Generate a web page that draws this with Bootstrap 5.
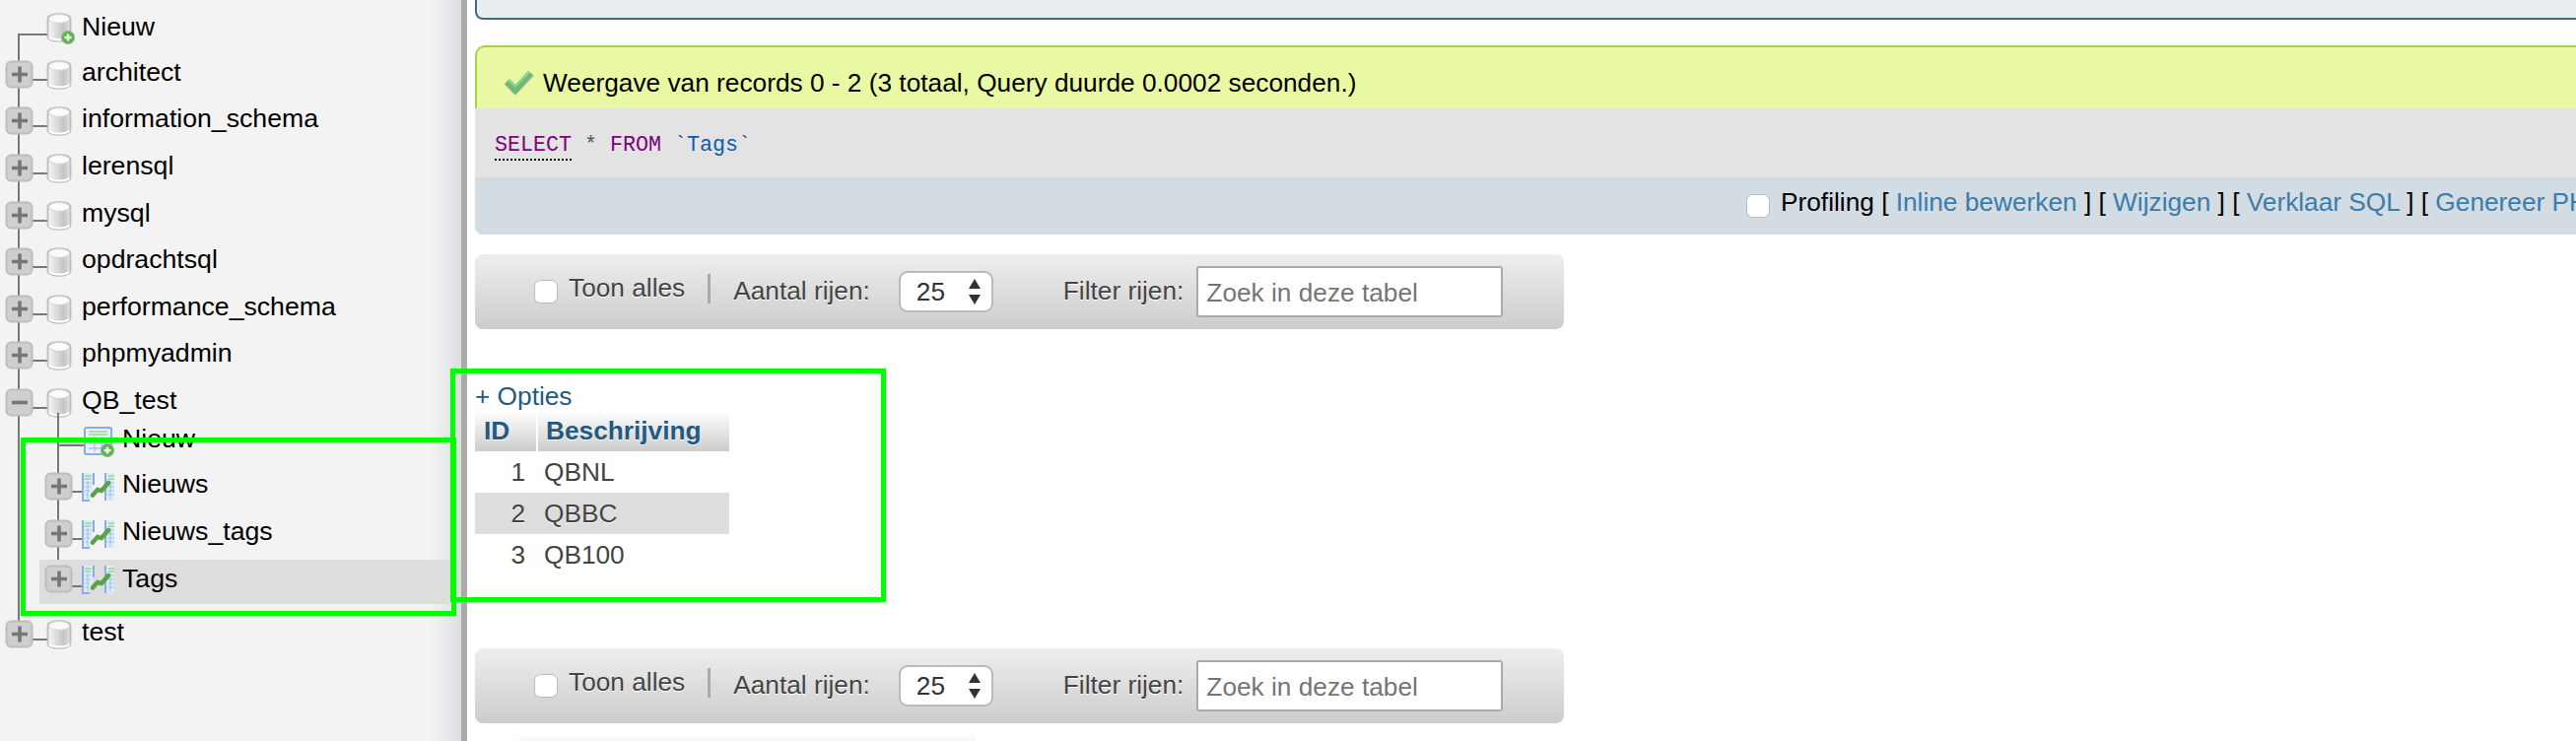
<!DOCTYPE html>
<html lang="nl">
<head>
<meta charset="utf-8">
<title>phpMyAdmin</title>
<link href="https://cdn.jsdelivr.net/npm/bootstrap@5.3.0/dist/css/bootstrap.min.css" rel="stylesheet">
<style>
html,body{height:752px;overflow:hidden}
body{font-family:"Liberation Sans",Arial,sans-serif;font-size:26.67px;color:#000;background:#fff;position:relative}
.pma-side{width:474px;height:752px;flex:none;border-right:6px solid #aaa;background:linear-gradient(to right,#f3f3f3 calc(100% - 32px),#dde0e3)}
.pma-tree{position:relative;margin:0;padding:0;list-style:none}
.pma-tree::before{content:"";position:absolute;left:18px;top:34px;width:2px;height:600px;background:#777}
.pma-sub{position:relative;margin:0 0 0 40px;padding:0;list-style:none}
.pma-sub::before{content:"";position:absolute;left:18px;top:-14px;width:2px;height:150px;background:#777}
.pma-row{position:relative;height:47.6px;display:flex;align-items:center}
.pma-row svg{flex:none;overflow:visible}
.pma-label{margin-left:7px;padding-bottom:6px;line-height:1.2;white-space:nowrap}
.pma-sub .pma-label{margin-left:8px}
.row-first{height:52px}
.row-first .pma-label{padding:2px 0 0}
.row-new{height:37.2px}
.row-new .pma-label{padding-bottom:12px}
.row-sub{height:48px}
.row-hl{height:45px;margin-top:2px;background:#ddd}
.row-last{margin-top:7px;height:48px}
.pma-main{flex:1 1 0;min-width:0;padding-left:8px;overflow:hidden;font-size:26.25px}
.pma-top{height:20px;background:#e8eef2;border:solid #3d6b80;border-width:0 0 2px 2px;border-bottom-left-radius:8px}
.pma-ok{margin-top:26px;height:64px;background:#e9f9a3;border:solid #a5d04a;border-width:2px 0 0 2px;border-top-left-radius:10px;padding:12px 0 0 27px;gap:8px;white-space:nowrap}
.pma-sql{height:70px;background:#e3e3e3;padding:7px 0 0 20px;font-family:"Liberation Mono","Courier New",monospace;font-size:21.67px;line-height:62px;color:#555;white-space:pre}
.sql-kw{color:#800080}
.sql-abbr{border-bottom:2px dotted #000;padding-bottom:1px}
.sql-id{color:#0b5cad}
.pma-links{height:58px;background:#d3dbe3;border-bottom-left-radius:8px;padding-left:1290px;white-space:nowrap}
.pma-links a{color:#3a7dab;text-decoration:none}
.links-text{padding-bottom:6px}
.pma-tick{width:24px;height:24px;margin:0 11px 0 0;flex:none;border:1px solid #bbb;border-radius:5px;background-color:#fff}
.pma-bar{width:1105px;height:76px;margin-top:20px;border-radius:8px;background:linear-gradient(#eee,#ccc);padding-left:60px;color:#444;text-shadow:0 1px 0 #fff;white-space:nowrap}
.bar-show{padding-bottom:6px}
.bar-sep{width:3px;height:30px;margin:0 23px 6px 23px;background:#aaa}
.bar-sel.form-select{width:96px;height:42px;flex:none;margin:0 71px 0 29px;padding:0 0 0 16px;font-size:26.25px;color:#333;border:2px solid #bbb;border-radius:9px;box-shadow:none;background-color:#fff;background-position:right 10px center;background-size:14px 28px;background-image:url("data:image/svg+xml,%3Csvg xmlns='http://www.w3.org/2000/svg' viewBox='0 0 14 28'%3E%3Cpath fill='%23333' d='M7 1l6 10H1zM7 27L1 17h12z'/%3E%3C/svg%3E")}
.bar-find.form-control{width:311px;height:52px;flex:none;margin-left:13px;padding:2px 8px 0;font-family:inherit;font-size:26.25px;color:#333;border:2px solid #aaa;border-radius:3px;box-shadow:none}
.bar-find.form-control::placeholder{color:#757575;opacity:1}
.pma-opts{margin-top:53px;height:30px;line-height:30px;color:#235a81}
.pma-grid.table{width:258px;margin:0;table-layout:fixed;border-collapse:separate;border-spacing:0;color:#444}
.pma-grid.table>thead>tr>th{height:41px;padding:0 0 0 8px;background:linear-gradient(#fff,#ccc);color:#235a81;font-weight:700;line-height:41px;border:0;box-shadow:none;text-shadow:0 1px 0 #fff}
.pma-grid.table>thead>tr>th:first-child{border-right:2px solid #fff;padding-left:9px}
.pma-grid.table>tbody>tr>td{height:42px;padding:0 0 0 6px;background:#fff;color:#444;line-height:42px;border:0;box-shadow:none;text-shadow:0 1px 0 #fff}
.pma-grid.table>tbody>tr>td:first-child{text-align:right;padding:0 13px 0 0}
.pma-grid.table>tbody>tr.grid-alt>td{background:#ddd}
.col-id{width:64px}
.bar-low{margin-top:74px}
.pma-fade{width:463px;height:8px;margin:10px 0 0 45px;background:linear-gradient(#fff,#f7f7f7)}
.pma-mark{position:absolute;border:5px solid #0f0;pointer-events:none}
.mark-tree{left:21px;top:444px;width:442px;height:181px}
.mark-grid{left:457px;top:374px;width:442px;height:237px}
</style>
</head>
<body>
<svg width="0" height="0" class="d-block" aria-hidden="true">
<defs>
<linearGradient id="dbg" x1="0" x2="1" y1="0" y2="0"><stop offset="0" stop-color="#f8f8f8"/><stop offset=".3" stop-color="#e2e2e2"/><stop offset=".72" stop-color="#c4c4c4"/><stop offset="1" stop-color="#e6e6e6"/></linearGradient>
<g id="ic-db">
<path d="M0.500-9C0.500-15.500 23.500-15.500 23.500-9V9C23.500 15.500 0.500 15.500 0.500 9Z" fill="url(#dbg)" stroke="#bdbdbd" stroke-width="1.8"/>
<path d="M1.500 8C3 12.500 21 12.500 22.500 8V10.500C21 14.500 3 14.500 1.500 10.500Z" fill="#fff"/>
<ellipse cx="12" cy="-9" rx="10.500" ry="4.400" fill="#fbfbfb" stroke="#d4d4d4"/>
</g>
<g id="ic-plus"><rect x="7" y="-13.500" width="26" height="26" rx="5" transform="translate(-0.500 0)" fill="#cfcfcf" stroke="#bdbdbd" stroke-width="2"/><path d="M12-.5H28M20-8.500V7.500" stroke="#777" stroke-width="3.600" fill="none"/></g>
<g id="ic-minus"><rect x="7" y="-13.500" width="26" height="26" rx="5" transform="translate(-0.500 0)" fill="#cfcfcf" stroke="#bdbdbd" stroke-width="2"/><path d="M12-.5H28" stroke="#777" stroke-width="3.600" fill="none"/></g>
<g id="ic-add"><circle r="6.600" fill="#5fae4f" stroke="#8fc587" stroke-width="1.200"/><path d="M-3.600 0H3.600M0-3.600V3.600" stroke="#e9f5e5" stroke-width="2.600"/></g>
<g id="ic-tbl">
<path d="M0-14H11V-3L7 14H0Z" fill="#dfeafa"/>
<path d="M0-14V14H7M11-14V-2" stroke="#86ade4" stroke-width="2" fill="none"/>
<path d="M2-11H9M2-8H8" stroke="#9bd48f" stroke-width="1.600"/>
<path d="M2-4H9M2 0H8M2 4H7M2 8H6M5-6V12" stroke="#a9c5ea" stroke-width="1.200"/>
<path d="M32-14H23V14H32Z" fill="#dfeafa"/>
<path d="M23-14V14" stroke="#86ade4" stroke-width="2" fill="none"/>
<path d="M26-11H32M26-8H32" stroke="#9bd48f" stroke-width="1.600"/>
<path d="M25-4H32M25 0H32M25 4H32M25 8H32M28-6V13" stroke="#a9c5ea" stroke-width="1.200"/>
<path d="M10 8.500L15 3 19 4 26-4" stroke="#5aa24a" stroke-width="4.600" fill="none" stroke-linecap="round"/>
</g>
<g id="ic-newtbl">
<rect x="2" y="-14" width="27" height="27" rx="2" fill="#e9f1fa" stroke="#86ade4" stroke-width="2"/>
<path d="M6-10H25M6-7H25" stroke="#9bd48f" stroke-width="1.600"/>
<path d="M6-3H25M6 2H25M6 7H25M12-5V11M19-5V11" stroke="#a9c5ea" stroke-width="1.400"/>
</g>
</defs>
</svg>
<div class="d-flex">
<nav class="pma-side">
<ul class="pma-tree">
<li class="pma-row row-first"><svg width="76" height="52" viewBox="0 -28 76 52"><path d="M19 7H48" stroke="#777" stroke-width="2"/><use href="#ic-db" x="48"/><use href="#ic-add" x="69" y="10"/></svg><span class="pma-label">Nieuw</span></li>
<li class="pma-row"><svg width="76" height="48" viewBox="0 -24 76 48"><path d="M33 5H48" stroke="#777" stroke-width="2"/><use href="#ic-plus"/><use href="#ic-db" x="48"/></svg><span class="pma-label">architect</span></li>
<li class="pma-row"><svg width="76" height="48" viewBox="0 -24 76 48"><path d="M33 5H48" stroke="#777" stroke-width="2"/><use href="#ic-plus"/><use href="#ic-db" x="48"/></svg><span class="pma-label">information_schema</span></li>
<li class="pma-row"><svg width="76" height="48" viewBox="0 -24 76 48"><path d="M33 5H48" stroke="#777" stroke-width="2"/><use href="#ic-plus"/><use href="#ic-db" x="48"/></svg><span class="pma-label">lerensql</span></li>
<li class="pma-row"><svg width="76" height="48" viewBox="0 -24 76 48"><path d="M33 5H48" stroke="#777" stroke-width="2"/><use href="#ic-plus"/><use href="#ic-db" x="48"/></svg><span class="pma-label">mysql</span></li>
<li class="pma-row"><svg width="76" height="48" viewBox="0 -24 76 48"><path d="M33 5H48" stroke="#777" stroke-width="2"/><use href="#ic-plus"/><use href="#ic-db" x="48"/></svg><span class="pma-label">opdrachtsql</span></li>
<li class="pma-row"><svg width="76" height="48" viewBox="0 -24 76 48"><path d="M33 5H48" stroke="#777" stroke-width="2"/><use href="#ic-plus"/><use href="#ic-db" x="48"/></svg><span class="pma-label">performance_schema</span></li>
<li class="pma-row"><svg width="76" height="48" viewBox="0 -24 76 48"><path d="M33 5H48" stroke="#777" stroke-width="2"/><use href="#ic-plus"/><use href="#ic-db" x="48"/></svg><span class="pma-label">phpmyadmin</span></li>
<li class="pma-row"><svg width="76" height="48" viewBox="0 -24 76 48"><path d="M33 5H48" stroke="#777" stroke-width="2"/><use href="#ic-minus"/><use href="#ic-db" x="48"/></svg><span class="pma-label">QB_test</span></li>
<li>
<ul class="pma-sub">
<li class="pma-row row-new"><svg width="76" height="38" viewBox="0 -19 76 38"><path d="M19 1H46" stroke="#777" stroke-width="2"/><use href="#ic-newtbl" x="44" y="-3"/><use href="#ic-add" x="69" y="6"/></svg><span class="pma-label">Nieuw</span></li>
<li class="pma-row row-sub"><svg width="76" height="48" viewBox="0 -24 76 48"><path d="M33 5H44" stroke="#777" stroke-width="2"/><use href="#ic-plus"/><use href="#ic-tbl" x="44"/></svg><span class="pma-label">Nieuws</span></li>
<li class="pma-row row-sub"><svg width="76" height="48" viewBox="0 -24 76 48"><path d="M33 5H44" stroke="#777" stroke-width="2"/><use href="#ic-plus"/><use href="#ic-tbl" x="44"/></svg><span class="pma-label">Nieuws_tags</span></li>
<li class="pma-row row-hl"><svg width="76" height="45" viewBox="0 -20 76 45"><path d="M33 7H44" stroke="#777" stroke-width="2"/><use href="#ic-plus"/><use href="#ic-tbl" x="44"/></svg><span class="pma-label">Tags</span></li>
</ul>
</li>
<li class="pma-row row-last"><svg width="76" height="48" viewBox="0 -24 76 48"><path d="M33 5H48" stroke="#777" stroke-width="2"/><use href="#ic-plus"/><use href="#ic-db" x="48"/></svg><span class="pma-label">test</span></li>
</ul>
</nav>
<main class="pma-main">
<div class="pma-top"></div>
<div class="pma-ok d-flex align-items-center">
<svg width="32" height="26" viewBox="0 0 32 26" class="flex-none"><path d="M1 14L6 9l6 6L26 1l5 4-19 20Z" fill="#bbb"/><path d="M1 13L6 8l6 6L25 0l5 4L12 24Z" fill="#6dbb70"/><path d="M6 8l6 6L25 0l2 1.800L12 17 4.500 10Z" fill="#93d295"/></svg>
<span>Weergave van records 0 - 2 (3 totaal, Query duurde 0.0002 seconden.)</span>
</div>
<div class="pma-sql"><span class="sql-kw sql-abbr">SELECT</span> * <span class="sql-kw">FROM</span> <span class="sql-id">`Tags`</span></div>
<div class="pma-links d-flex align-items-center">
<input class="form-check-input pma-tick" type="checkbox" aria-label="Profiling">
<span class="links-text">Profiling [ <a href="#">Inline bewerken</a> ] [ <a href="#">Wijzigen</a> ] [ <a href="#">Verklaar SQL</a> ] [ <a href="#">Genereer PHP-code</a> ]</span>
</div>
<div class="pma-bar d-flex align-items-center">
<input class="form-check-input pma-tick" type="checkbox" aria-label="Toon alles">
<span class="bar-show">Toon alles</span>
<span class="bar-sep"></span>
<span>Aantal rijen:</span>
<select class="form-select bar-sel" aria-label="Aantal rijen"><option>25</option></select>
<span>Filter rijen:</span>
<input class="form-control bar-find" type="text" placeholder="Zoek in deze tabel">
</div>
<div class="pma-opts">+ Opties</div>
<table class="table pma-grid">
<colgroup><col class="col-id"><col></colgroup>
<thead><tr><th>ID</th><th>Beschrijving</th></tr></thead>
<tbody>
<tr><td>1</td><td>QBNL</td></tr>
<tr class="grid-alt"><td>2</td><td>QBBC</td></tr>
<tr><td>3</td><td>QB100</td></tr>
</tbody>
</table>
<div class="pma-bar bar-low d-flex align-items-center">
<input class="form-check-input pma-tick" type="checkbox" aria-label="Toon alles">
<span class="bar-show">Toon alles</span>
<span class="bar-sep"></span>
<span>Aantal rijen:</span>
<select class="form-select bar-sel" aria-label="Aantal rijen"><option>25</option></select>
<span>Filter rijen:</span>
<input class="form-control bar-find" type="text" placeholder="Zoek in deze tabel">
</div>
<div class="pma-fade"></div>
</main>
</div>
<div class="pma-mark mark-tree"></div>
<div class="pma-mark mark-grid"></div>
<script src="https://cdn.jsdelivr.net/npm/bootstrap@5.3.0/dist/js/bootstrap.bundle.min.js"></script>
</body>
</html>
